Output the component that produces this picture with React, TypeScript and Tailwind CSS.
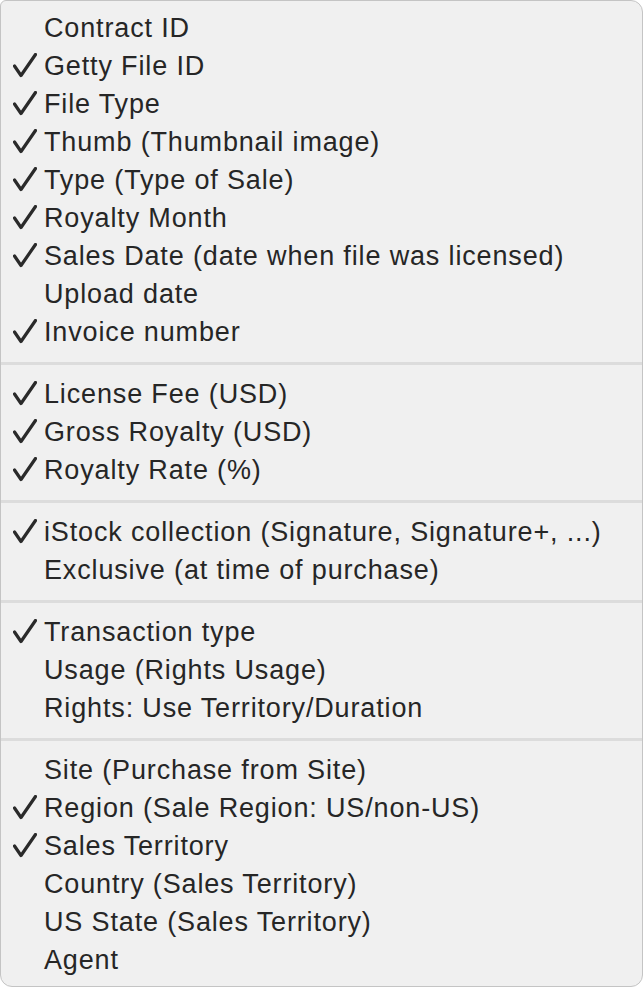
import React from "react";

type Item = { label: string; checked: boolean } | "sep";

const items: Item[] = [
  { label: "Contract ID", checked: false },
  { label: "Getty File ID", checked: true },
  { label: "File Type", checked: true },
  { label: "Thumb (Thumbnail image)", checked: true },
  { label: "Type (Type of Sale)", checked: true },
  { label: "Royalty Month", checked: true },
  { label: "Sales Date (date when file was licensed)", checked: true },
  { label: "Upload date", checked: false },
  { label: "Invoice number", checked: true },
  "sep",
  { label: "License Fee (USD)", checked: true },
  { label: "Gross Royalty (USD)", checked: true },
  { label: "Royalty Rate (%)", checked: true },
  "sep",
  { label: "iStock collection (Signature, Signature+, ...)", checked: true },
  { label: "Exclusive (at time of purchase)", checked: false },
  "sep",
  { label: "Transaction type", checked: true },
  { label: "Usage (Rights Usage)", checked: false },
  { label: "Rights: Use Territory/Duration", checked: false },
  "sep",
  { label: "Site (Purchase from Site)", checked: false },
  { label: "Region (Sale Region: US/non-US)", checked: true },
  { label: "Sales Territory", checked: true },
  { label: "Country (Sales Territory)", checked: false },
  { label: "US State (Sales Territory)", checked: false },
  { label: "Agent", checked: false },
];

function Check() {
  return (
    <svg width="24" height="26" viewBox="0 0 24 26" className="ml-[12px]">
      <path d="M1.5 13 L8 22.5 L22.5 1.5" fill="none" stroke="#2a2a2a" strokeWidth="3.2" strokeLinecap="round" strokeLinejoin="round" />
    </svg>
  );
}

export default function App() {
  return (
    <div className="w-[644px] h-[988px] bg-white relative overflow-hidden">
      <div
        className="w-[643px] h-[987px] bg-[#f0f0f0] border border-[#c4c4c4] rounded-tl-[6px] rounded-tr-[12px] rounded-b-[12px] pt-[8px] pb-[8px] text-[#262626] text-[27px] tracking-[0.85px]"
        style={{ fontFamily: "'Liberation Sans', Arial, sans-serif" }}
      >
        {items.map((it, i) =>
          it === "sep" ? (
            <div key={i} className="h-[24px] flex items-center">
              <div className="w-full h-[3px] bg-[#dcdcdc]" />
            </div>
          ) : (
            <div key={i} className="h-[38px] flex items-center">
              <span className="w-[43px] shrink-0 flex items-center">{it.checked ? <Check /> : null}</span>
              <span className="leading-none whitespace-nowrap">{it.label}</span>
            </div>
          )
        )}
      </div>
    </div>
  );
}
